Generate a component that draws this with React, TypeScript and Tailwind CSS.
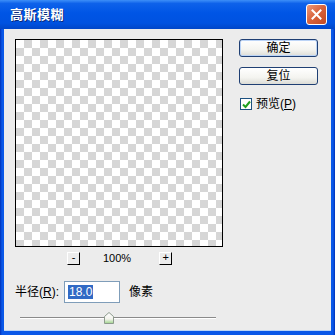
import React from "react";

const cjk = "font-['Tahoma','Liberation_Sans','Noto_Sans_CJK_SC',sans-serif]";

function XpButton({ label, primary }: { label: string; primary?: boolean }) {
  return (
    <div
      className={`w-[79px] h-[18px] flex items-center justify-center rounded-[3px] border border-[#1f3f73] bg-[linear-gradient(#ffffff,#f4f4f0_60%,#dcdcd6)] text-[12px] leading-none text-black ${
        primary ? "shadow-[inset_0_0_0_1px_#bcd4f6]" : ""
      }`}
    >
      {label}
    </div>
  );
}

function MiniBtn({ children }: { children: React.ReactNode }) {
  return (
    <div className="w-[13px] h-[13px] border-r border-b border-black border-l border-t border-l-white border-t-white flex items-start justify-center text-[11px] leading-[9px] font-['Liberation_Sans',sans-serif] text-black">
      {children}
    </div>
  );
}

export default function App() {
  return (
    <div className={`w-[335px] h-[335px] flex flex-col overflow-hidden bg-[linear-gradient(90deg,#0030b8,#0a58e8_2px,#0a58e8_calc(100%-2px),#0030b8)] ${cjk}`}>
      {/* Title bar */}
      <div className="h-[29px] shrink-0 flex items-center pl-[10px] pr-[8px] bg-[linear-gradient(#3d8ff8,#0e62ea_12%,#0055e5_45%,#0052e0_80%,#0046c8)]">
        <span className="text-white font-bold text-[13px] leading-none tracking-[0.5px] [text-shadow:1px_1px_0_#0a2a7a]">
          高斯模糊
        </span>
        <div className="ml-auto w-[21px] h-[21px] rounded-[3px] border border-white bg-[linear-gradient(135deg,#ec9a7a,#d8613a_50%,#c24a22)] flex items-center justify-center">
          <svg width="11" height="11" viewBox="0 0 11 11">
            <path d="M1.5 1.5 L9.5 9.5 M9.5 1.5 L1.5 9.5" stroke="white" strokeWidth="2" strokeLinecap="square" />
          </svg>
        </div>
      </div>

      {/* Client area */}
      <div className="flex-1 mx-[4px] mb-[4px] bg-[#ececec] border-b border-b-[#bcd6f6] flex flex-col pl-[11px] pt-[10px]">
        <div className="flex">
          {/* Left column */}
          <div className="flex flex-col w-[208px]">
            <div className="w-[208px] h-[208px] border border-black bg-[conic-gradient(#d6d6d6_25%,#ffffff_0_50%,#d6d6d6_0_75%,#ffffff_0)] bg-size-[16px_16px]" />
            <div className="mt-[5px] h-[13px] flex items-center pl-[52px]">
              <MiniBtn>-</MiniBtn>
              <span className="ml-[23px] text-[11px] leading-none text-black font-['Liberation_Sans',sans-serif]">100%</span>
              <div className="ml-[28px]">
                <MiniBtn>+</MiniBtn>
              </div>
            </div>
          </div>
          {/* Right column */}
          <div className="ml-[16px] flex flex-col">
            <XpButton label="确定" primary />
            <div className="mt-[10px]">
              <XpButton label="复位" />
            </div>
            <div className="mt-[13px] flex items-center">
              <div className="w-[12px] h-[12px] border border-[#1c5180] bg-white flex items-center justify-center ml-[1px]">
                <svg width="9" height="9" viewBox="0 0 9 9">
                  <path d="M1 4.5 L3.5 7 L8 1.5" stroke="#21a121" strokeWidth="2" fill="none" />
                </svg>
              </div>
              <span className="ml-[4px] text-[12px] leading-none text-black">
                预览(<span className="underline">P</span>)
              </span>
            </div>
          </div>
        </div>

        {/* Radius row */}
        <div className="mt-[16px] h-[22px] flex items-center">
          <span className="w-[49px] text-[12px] leading-none text-black">
            半径(<span className="underline">R</span>):
          </span>
          <div className="w-[56px] h-[22px] border border-[#7f9db9] bg-white flex items-center pl-[3px]">
            <span className="bg-[#316ac5] text-white text-[12px] leading-[14px] px-[1px] font-['Liberation_Sans',sans-serif]">18.0</span>
          </div>
          <span className="ml-[9px] text-[12px] leading-none text-black">像素</span>
        </div>

        {/* Slider */}
        <div className="mt-[8px] h-[13px] ml-[5px] w-[196px] relative flex items-center">
          <div className="w-full h-[2px] border-t border-t-[#8a8a8a] border-b border-b-white" />
          <div className="absolute left-[84px] top-[1px]">
            <svg width="10" height="12" viewBox="0 0 10 12">
              <defs>
                <linearGradient id="thumb" x1="0" y1="0" x2="0" y2="1">
                  <stop offset="0" stopColor="#ffffff" />
                  <stop offset="0.6" stopColor="#f2f2ec" />
                  <stop offset="1" stopColor="#9ed48a" />
                </linearGradient>
              </defs>
              <path d="M5 0.5 L9.5 4.5 L9.5 11.5 L0.5 11.5 L0.5 4.5 Z" fill="url(#thumb)" stroke="#8c9a8c" strokeWidth="1" />
            </svg>
          </div>
        </div>
      </div>
    </div>
  );
}
